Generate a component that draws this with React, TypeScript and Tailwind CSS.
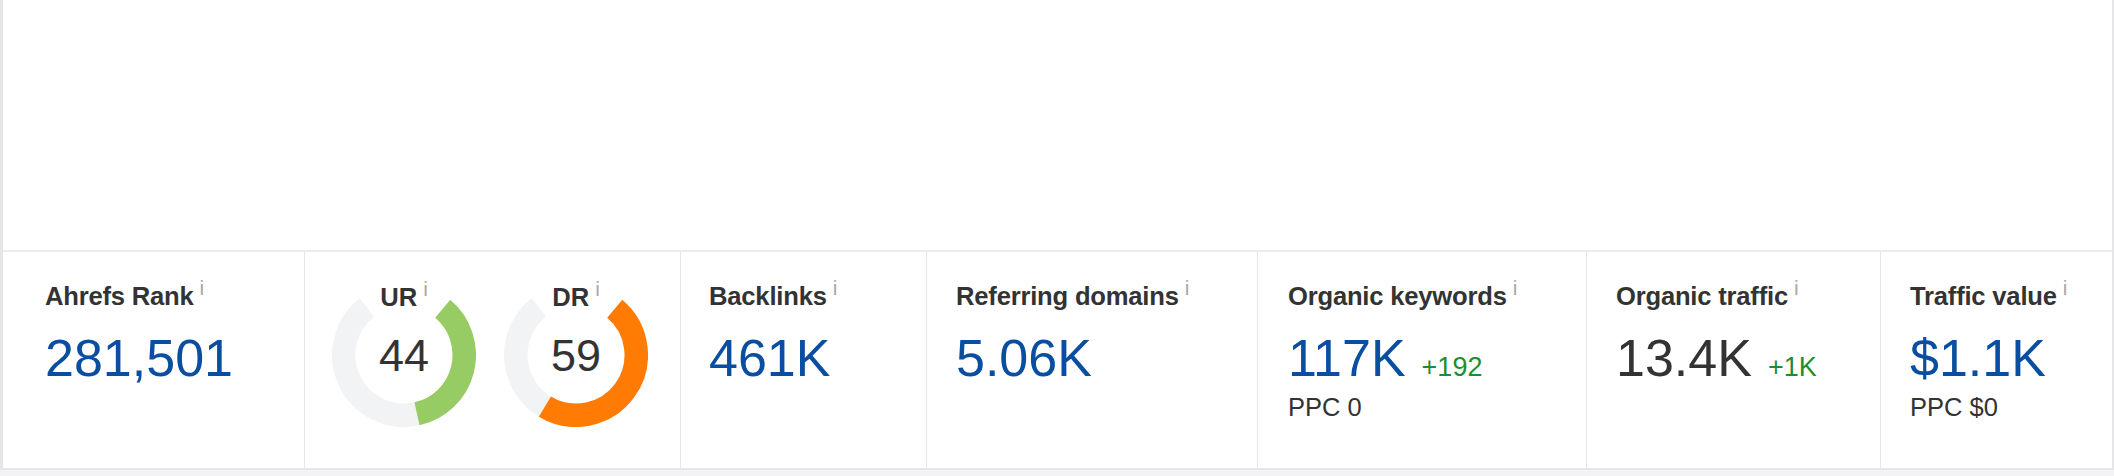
import React from 'react';

const FONT = { fontFamily: '"Liberation Sans", Arial, Helvetica, sans-serif' };

function polar(cx: number, cy: number, r: number, deg: number) {
  const a = (deg * Math.PI) / 180;
  return [cx + r * Math.sin(a), cy - r * Math.cos(a)];
}

function arcPath(cx: number, cy: number, r: number, from: number, to: number) {
  const [x0, y0] = polar(cx, cy, r, from);
  const [x1, y1] = polar(cx, cy, r, to);
  const large = to - from > 180 ? 1 : 0;
  return `M ${x0} ${y0} A ${r} ${r} 0 ${large} 1 ${x1} ${y1}`;
}

function Info() {
  return (
    <span className="ml-[6px] -mt-[7px] text-[21px] leading-none text-[#a9a9a9]">i</span>
  );
}

function Title({ children }: { children: React.ReactNode }) {
  return (
    <div className="flex items-start">
      <span className="text-[25.6px] leading-none font-bold text-[#333] tracking-[-0.2px]">
        {children}
      </span>
      <Info />
    </div>
  );
}

function Gauge({ label, value, color }: { label: string; value: number; color: string }) {
  // gauge runs clockwise from 40deg to 330deg (measured from top)
  const start = 40;
  const span = 290;
  const end = start + (span * value) / 100;
  return (
    <div className="relative w-[144px] h-[144px]">
      <svg width="144" height="144" viewBox="0 0 144 144">
        <path d={arcPath(72, 72, 60.25, end, 322)} fill="none" stroke="#f2f3f5" strokeWidth="23.5" />
        <path d={arcPath(72, 72, 60.25, start, end)} fill="none" stroke={color} strokeWidth="23.5" />
      </svg>
      <div className="absolute left-0 right-0 top-[2px] flex justify-center">
        <div className="flex items-start">
          <span className="text-[25.6px] leading-none font-bold text-[#333]">{label}</span>
          <Info />
        </div>
      </div>
      <div className="absolute inset-0 flex items-center justify-center">
        <span className="text-[45px] leading-none text-[#333]">{value}</span>
      </div>
    </div>
  );
}

interface MetricProps {
  title: string;
  value: string;
  valueClass?: string;
  delta?: string;
  sub?: string;
  width: string;
  pad: string;
  last?: boolean;
}

function Metric({ title, value, valueClass = 'text-[#0a4ea2]', delta, sub, width, pad, last }: MetricProps) {
  return (
    <div className={`${width} ${pad} pt-[32px] ${last ? '' : 'border-r border-[#e7e7e9]'}`}>
      <Title>{title}</Title>
      <div className="mt-[22px] flex items-baseline">
        <span className={`text-[52px] leading-none ${valueClass}`}>{value}</span>
        {delta && <span className="ml-[16px] text-[27px] leading-none text-[#1d8e2e]">{delta}</span>}
      </div>
      {sub && <div className="mt-[11px] text-[25.5px] leading-none text-[#333]">{sub}</div>}
    </div>
  );
}

export default function App() {
  return (
    <div className="w-[2114px] h-[476px] bg-[#f3f3f5]" style={FONT}>
      <div className="bg-white border-l-[3px] border-r-2 border-b-2 border-[#e6e6e9]">
        <div className="h-[252px] border-b-2 border-[#ececee]" />
        <div className="flex h-[216px]">
          <Metric title="Ahrefs Rank" value="281,501" width="w-[302px]" pad="pl-[42px]" />
          <div className="w-[376px] flex gap-[28px] pl-[27px] pt-[31px] border-r border-[#e7e7e9]">
            <Gauge label="UR" value={44} color="#97cb63" />
            <Gauge label="DR" value={59} color="#ff7b03" />
          </div>
          <Metric title="Backlinks" value="461K" width="w-[246px]" pad="pl-[28px]" />
          <Metric title="Referring domains" value="5.06K" width="w-[331px]" pad="pl-[29px]" />
          <Metric title="Organic keywords" value="117K" delta="+192" sub="PPC 0" width="w-[329px]" pad="pl-[30px]" />
          <Metric title="Organic traffic" value="13.4K" valueClass="text-[#333]" delta="+1K" width="w-[294px]" pad="pl-[29px]" />
          <Metric title="Traffic value" value="$1.1K" sub="PPC $0" width="flex-1" pad="pl-[29px]" last />
        </div>
      </div>
    </div>
  );
}
